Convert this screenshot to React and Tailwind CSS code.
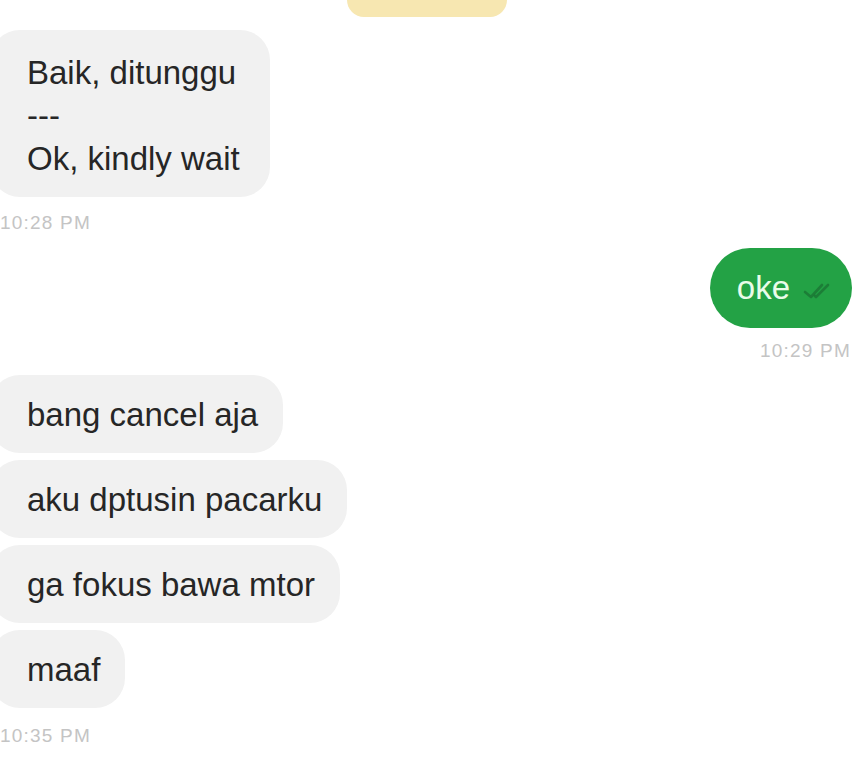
const font = { fontFamily: '"Liberation Sans", Arial, sans-serif' };

function LeftBubble({ children }) {
  return (
    <div className="-ml-[10px] flex h-[78px] w-fit items-center rounded-[30px] bg-[#f1f1f1] pl-[37px] pr-[25px] text-[33px] leading-[43px] text-[#262626]">
      {children}
    </div>
  );
}

function Stamp({ children, right }) {
  return (
    <p className={`text-[19px] leading-[22px] tracking-[1.2px] text-[#c4c4c4] ${right ? 'mr-[12px] text-right' : ''}`}>{children}</p>
  );
}

function DoubleTick() {
  return (
    <svg width="30" height="20" viewBox="0 0 30 20" fill="none" className="mt-[4px]">
      <path d="M3 12 L9 17 L20 5" stroke="#1a7533" strokeWidth="2.6" strokeLinecap="round" strokeLinejoin="round" opacity="0.8" />
      <path d="M13 16 L14 17 L26 5" stroke="#1a7533" strokeWidth="2.6" strokeLinecap="round" strokeLinejoin="round" opacity="0.8" />
    </svg>
  );
}

export default function App() {
  return (
    <div className="min-h-[780px] w-[863px] overflow-hidden bg-white" style={font}>
      <div className="ml-[347px] h-[17px] w-[160px] rounded-b-[22px] bg-[#f7e7b1]" />

      <div className="mt-[13px] -ml-[10px] w-fit rounded-[30px] bg-[#f1f1f1] pb-[17px] pl-[37px] pr-[30px] pt-[21px] text-[33px] leading-[43px] text-[#262626]">
        <p>Baik, ditunggu</p>
        <p>---</p>
        <p>Ok, kindly wait</p>
      </div>
      <div className="mt-[15px]">
        <Stamp>10:28 PM</Stamp>
      </div>

      <div className="mt-[14px] flex justify-end pr-[11px]">
        <div className="flex h-[80px] items-center gap-[12px] rounded-full bg-[#23a245] pl-[27px] pr-[20px] text-[33px] text-[#e9fce9]">
          <span>oke</span>
          <DoubleTick />
        </div>
      </div>
      <div className="mt-[12px]">
        <Stamp right>10:29 PM</Stamp>
      </div>

      <div className="mt-[13px] flex flex-col gap-[7px]">
        <LeftBubble>bang cancel aja</LeftBubble>
        <LeftBubble>aku dptusin pacarku</LeftBubble>
        <LeftBubble>ga fokus bawa mtor</LeftBubble>
        <LeftBubble>maaf</LeftBubble>
      </div>
      <div className="mt-[17px]">
        <Stamp>10:35 PM</Stamp>
      </div>
    </div>
  );
}
